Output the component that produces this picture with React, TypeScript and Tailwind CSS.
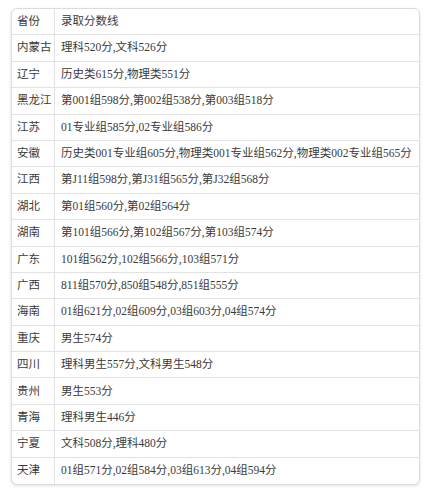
const rows: [string, string][] = [
  ["内蒙古", "理科520分,文科526分"],
  ["辽宁", "历史类615分,物理类551分"],
  ["黑龙江", "第001组598分,第002组538分,第003组518分"],
  ["江苏", "01专业组585分,02专业组586分"],
  ["安徽", "历史类001专业组605分,物理类001专业组562分,物理类002专业组565分"],
  ["江西", "第J11组598分,第J31组565分,第J32组568分"],
  ["湖北", "第01组560分,第02组564分"],
  ["湖南", "第101组566分,第102组567分,第103组574分"],
  ["广东", "101组562分,102组566分,103组571分"],
  ["广西", "811组570分,850组548分,851组555分"],
  ["海南", "01组621分,02组609分,03组603分,04组574分"],
  ["重庆", "男生574分"],
  ["四川", "理科男生557分,文科男生548分"],
  ["贵州", "男生553分"],
  ["青海", "理科男生446分"],
  ["宁夏", "文科508分,理科480分"],
  ["天津", "01组571分,02组584分,03组613分,04组594分"],
];

function Row({ left, right, last }: { left: string; right: string; last?: boolean }) {
  return (
    <div
      className={`flex h-[26.4px] items-center ${last ? "" : "border-b border-[#e2e2e2]"}`}
    >
      <div className="flex h-full w-[43px] shrink-0 items-center border-r border-[#e2e2e2] pl-[5px]">
        {left}
      </div>
      <div className="flex h-full items-center pl-[6px] whitespace-nowrap">{right}</div>
    </div>
  );
}

export default function App() {
  return (
    <div className="h-[496px] w-[442px] bg-white pt-[8px] pl-[11px]">
      <div
        className="w-[409px] overflow-hidden rounded-[6px] border border-[#dcdcdc] bg-white text-[11.5px] text-[#3a3a3a] shadow-[0_1px_3px_rgba(0,0,0,0.12)]"
        style={{ fontFamily: '"Liberation Serif", "Noto Sans CJK SC", serif' }}
      >
        <Row left="省份" right="录取分数线" />
        {rows.map(([l, r], i) => (
          <Row key={l} left={l} right={r} last={i === rows.length - 1} />
        ))}
      </div>
    </div>
  );
}
